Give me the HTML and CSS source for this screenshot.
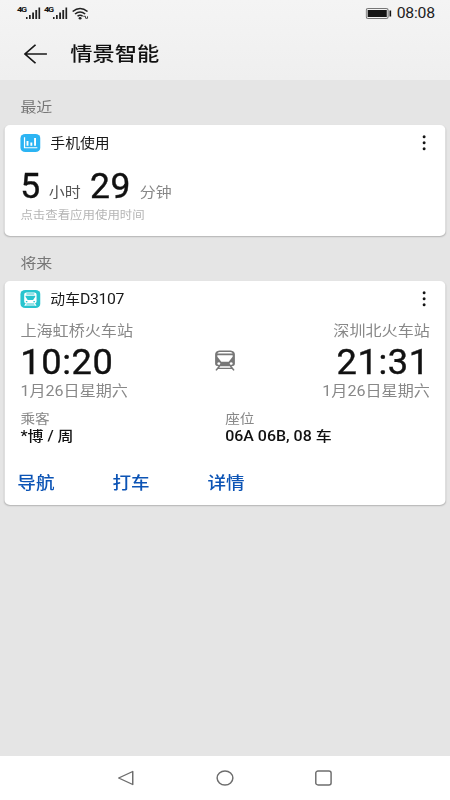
FILE: index.html
```html
<!DOCTYPE html>
<html lang="zh-CN">
<head>
<meta charset="utf-8">
<title>情景智能</title>
<link rel="stylesheet" href="styles.css">
</head>
<body>
<div class="screen">
  <header class="top">
    <div class="status">
      <span class="net">4G</span>
      <svg class="signal" width="13" height="13" viewBox="0 0 13 13"><path d="M0 11h1.5v2H0zM2.8 9h1.5v4H2.8zM5.6 6.5h1.6V13H5.6zM8.4 4H10v9H8.4zM11.2 1.5h1.6V13h-1.6z"/></svg>
      <span class="net second">4G</span>
      <svg class="signal" width="13" height="13" viewBox="0 0 13 13"><path d="M0 11h1.5v2H0zM2.8 9h1.5v4H2.8zM5.6 6.5h1.6V13H5.6zM8.4 4H10v9H8.4zM11.2 1.5h1.6V13h-1.6z"/></svg>
      <svg class="wifi" width="15" height="13" viewBox="0 0 15 13"><g fill="none" stroke="#222" stroke-width="1.4"><path d="M.6 4.6Q7.2-1.8 13.8 4.6M2.7 7.1Q7.2 2.9 11.7 7.1M4.9 9.3Q7.2 7.3 9.5 9.3"/><path d="M10 9.3h2v2m1.8-2v2h-1.6" stroke-width=".8"/></g><circle cx="7.2" cy="11.2" r="1.3"/></svg>
      <svg class="battery" width="23" height="11" viewBox="0 0 23 11"><rect x=".5" y=".5" width="19.5" height="10" rx="1.8" fill="#f2f2f2" stroke="#777"/><path d="M1.8 2h17v7h-17zM21.2 2.5h1.6v6h-1.6z"/></svg>
      <span class="clock">08:08</span>
    </div>
    <div class="titlebar">
      <svg class="back" width="21" height="20" viewBox="0 0 21 20"><path d="M10.6.8 1.2 10l9.4 9.2M1.2 10h19.5" fill="none" stroke="#181818" stroke-width="1.6"/></svg>
      <h1>情景智能</h1>
    </div>
  </header>
  <main>
    <h2 class="recent">最近</h2>
    <section class="card usage">
      <div class="head">
        <svg width="18" height="18" viewBox="0 0 18 18"><rect width="18" height="18" rx="4.5" fill="#2cb4f3"/><path d="M3.8 3.3v10.4h11.4" fill="none" stroke="#fff" stroke-width="1.1"/><path d="M5.6 7h1.7v4.8H5.6zM9 8.5h1.7v3.3H9zM12.3 4H14v7.8h-1.7z" fill="#fff"/></svg>
        <h3>手机使用</h3>
        <svg class="more" width="4" height="18" viewBox="0 0 4 18"><ellipse cx="2" cy="2.8" rx="1.3" ry="1.5"/><ellipse cx="2" cy="8.8" rx="1.3" ry="1.5"/><ellipse cx="2" cy="14.8" rx="1.3" ry="1.5"/></svg>
      </div>
      <div class="duration"><b class="h">5</b><span class="hours">小时</span><b class="m">29</b><span class="minutes">分钟</span></div>
      <p class="hint">点击查看应用使用时间</p>
    </section>
    <h2 class="future">将来</h2>
    <section class="card trip">
      <div class="head">
        <svg width="18" height="18" viewBox="0 0 18 18"><rect width="18" height="18" rx="4.5" fill="#28c4ce"/><path fill="#fff" fill-rule="evenodd" d="M5.5 2.5h7Q14.500 2.500 14.500 4.500v7q0 2-2 2h-7q-2 0-2-2v-7Q3.500 2.500 5.500 2.500zM5.500 3.600v1h7v-1zM4.700 5.800v1L6.600 10h4.800l1.900-3.200v-1zM5 11h1.300v1.300H5zM11.700 11H13v1.300h-1.300z"/><path d="M5.500 13.200 4 15.800M12.500 13.200l1.500 2.600M5 14.900h8" fill="none" stroke="#fff"/></svg>
        <h3 class="latin">动车<span>D3107</span></h3>
        <svg class="more" width="4" height="18" viewBox="0 0 4 18"><ellipse cx="2" cy="2.8" rx="1.3" ry="1.5"/><ellipse cx="2" cy="8.8" rx="1.3" ry="1.5"/><ellipse cx="2" cy="14.8" rx="1.3" ry="1.5"/></svg>
      </div>
      <div class="route">
        <div class="stop">
          <p>上海虹桥火车站</p>
          <div class="time">10:20</div>
          <p class="date">1月26日星期六</p>
        </div>
        <svg class="train" width="18" height="21" viewBox="0 0 18 21"><path fill="#777" fill-rule="evenodd" d="M4 .5h10Q17.800 1 17.800 4.500v9q0 2.800-2.800 2.800H3q-2.800 0-2.800-2.800v-9Q.2 1 4 .5zM4.200 2Q2.500 2.200 2.200 3.500h13.600Q15.500 2.200 13.800 2zM2.200 5.200v1.600L5.700 11.800h6.600l3.500-5V5.200zM3.500 12.200a1.300 1.300 0 1 0 .01 0zM14.500 12.200a1.300 1.300 0 1 0 .01 0z"/><path d="M4.200 16 1 20.300M13.800 16l3.200 4.300M3 18.400h12" fill="none" stroke="#777" stroke-width="1.4"/></svg>
        <div class="stop arrive">
          <p>深圳北火车站</p>
          <div class="time">21:31</div>
          <p class="date">1月26日星期六</p>
        </div>
      </div>
      <dl class="facts">
        <div><dt>乘客</dt><dd>*博 / 周</dd></div>
        <div><dt>座位</dt><dd>06A 06B, 08 车</dd></div>
      </dl>
      <div class="actions"><a>导航</a><a>打车</a><a>详情</a></div>
    </section>
  </main>
  <nav>
    <svg width="16" height="16" viewBox="0 0 16 16"><path d="M14 1.5v13L1.5 8z"/></svg>
    <svg width="16" height="16" viewBox="0 0 16 16"><circle cx="8" cy="8" r="7"/></svg>
    <svg width="16" height="16" viewBox="0 0 16 16"><rect x=".7" y="1" width="13.600" height="14" rx="2"/></svg>
  </nav>
</div>
</body>
</html>
```
FILE: styles.css
```css
* { box-sizing: border-box; margin: 0; padding: 0; }
body {
  width: 450px;
  height: 800px;
  overflow: hidden;
  background: #e5e5e5;
  font-family: Roboto, "Noto Sans CJK SC", sans-serif;
  color: #111;
}
/* The layout is drawn on a 400px grid and widened to the viewport. */
.screen {
  width: 400px;
  height: 800px;
  display: flex;
  flex-direction: column;
  transform: scaleX(1.125);
  transform-origin: 0 0;
}
svg { display: block; flex: none; }
h1, h2, h3 { font-weight: 400; }

.top { height: 80px; background: linear-gradient(#f4f4f4, #efefef); }
.status { height: 27px; padding: 6px 13.5px 0 15px; display: flex; align-items: flex-start; }
.net { width: 8px; font: 700 8px/8px "Roboto", sans-serif; letter-spacing: -1px; }
.second { margin-left: 3px; }
.signal { fill: #222; }
.wifi { margin: 1px 0 0 4px; fill: #222; }
.battery { margin: 2px 5px 0 auto; fill: #151515; }
.clock { font-size: 14px; line-height: 15px; letter-spacing: -0.2px; color: #222; }
.titlebar { height: 53px; padding-left: 21px; display: flex; align-items: center; }
.back { margin-right: 20.5px; }
h1 { font-size: 19.8px; line-height: 28px; font-weight: 500; padding-top: 3px; }

main { flex: 1; padding: 0 4.44px; }
h2 { padding-left: 13.7px; font-size: 14.2px; color: #777; }
.recent, .future { height: 45px; line-height: 54px; }
.card { background: #fff; border-radius: 5px; box-shadow: 0 1px 1.5px rgba(0, 0, 0, .22); }
.usage { height: 111px; }
.trip { height: 224px; }
.head { height: 36px; padding: 0 16.9px 0 13.3px; display: flex; align-items: center; }
h3 { margin-left: 9px; padding-top: 1px; font-size: 13.2px; line-height: 20px; color: #181818; }
.latin span { font-size: 14px; letter-spacing: -0.3px; }
.more { margin-left: auto; fill: #151515; }
.duration { height: 45px; padding-left: 13.5px; display: flex; align-items: baseline; line-height: 52px; font-size: 14.2px; }
.duration b { font-weight: 400; font-size: 35px; letter-spacing: 0.6px; transform: scaleX(.9); transform-origin: 0 50%; -webkit-text-stroke: 0.4px #111; }
.h { width: 18px; }
.m { width: 36.5px; }
.duration span { position: relative; top: -1px; }
.hours { margin: 0 8px 0 7.5px; color: #555; }
.minutes { margin-left: 8px; color: #888; }
.hint { padding-left: 13.7px; font-size: 11.05px; line-height: 20px; color: #b5b5b5; }

.route { height: 93px; padding: 4px 13.5px 0 13.7px; display: flex; justify-content: space-between; }
.stop { width: 160px; font-size: 14.3px; line-height: 21px; color: #888; }
.date { line-height: 20px; }
.arrive { text-align: right; }
.time { height: 39px; font-size: 35px; line-height: 41px; letter-spacing: 0.6px; color: #111; transform: scaleX(.92); transform-origin: 0 50%; -webkit-text-stroke: 0.4px #111; }
.arrive .time { transform-origin: 100% 50%; }
.train { margin-top: 29px; }
.facts { height: 53px; padding-left: 13.7px; display: grid; grid-template-columns: 182px 1fr; }
dt { font-size: 13px; line-height: 17px; color: #888; }
dd { font-size: 14.2px; line-height: 18px; font-weight: 500; }
.actions { padding-left: 11px; display: grid; grid-template-columns: 84.5px 84.5px 84.5px; font-size: 16.5px; line-height: 42px; font-weight: 500; color: #0c54b5; }

nav { height: 44px; padding: 0 104px; display: flex; align-items: center; justify-content: space-between; background: #fff; }
nav svg { fill: none; stroke: #6d6d6d; stroke-width: 1.3; stroke-linejoin: round; }
```
